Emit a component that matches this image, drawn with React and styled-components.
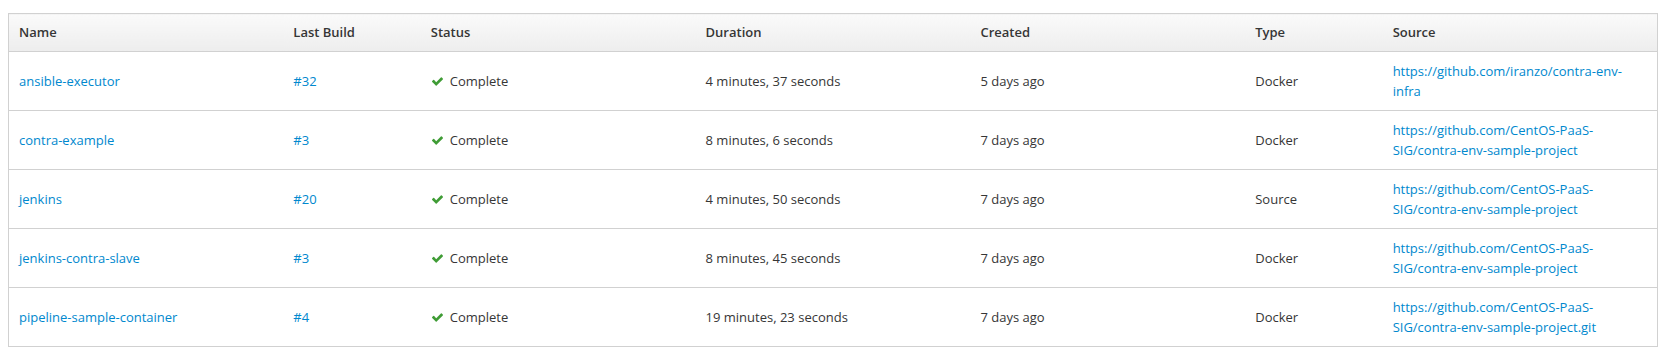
import React from "react";
import styled, { createGlobalStyle } from "styled-components";

const Global = createGlobalStyle`
  html, body { margin: 0; padding: 0; background: #fff; }
  body { font-family: "Open Sans", "Liberation Sans", sans-serif; font-size: 13px; color: #363636; }
`;

const Page = styled.div`
  padding: 13px 12px 13px 8px;
`;

const Table = styled.table`
  width: 100%;
  border-collapse: collapse;
  table-layout: fixed;
  border: 1px solid #d1d1d1;
  font-size: 13px;
  line-height: 20px;
`;

const Col = styled.col`
  width: ${(p) => (p.$span / 12) * 100}%;
`;

const HeadCell = styled.th`
  text-align: left;
  font-weight: 600;
  color: #363636;
  padding: 8px 10px 9px;
  background: linear-gradient(to bottom, #fafafa 0%, #ededed 100%);
  border-bottom: 1px solid #d1d1d1;
`;

const Row = styled.tr`
  border-bottom: 1px solid #d1d1d1;
`;

const Cell = styled.td`
  padding: 9px 10px;
  vertical-align: middle;
  color: #363636;
  word-wrap: break-word;
`;

const Link = styled.a`
  color: #0088ce;
  text-decoration: none;
`;

const Status = styled.span`
  display: inline-flex;
  align-items: center;
  gap: 7px;
`;

const CheckIcon = () => (
  <svg width="11" height="9" viewBox="0 0 1550 1188" style={{ marginLeft: 1 }}>
    <path
      fill="#3f9c35"
      d="M1550 232q0 40-28 68l-724 724-136 136q-28 28-68 28t-68-28l-136-136-362-362q-28-28-28-68t28-68l136-136q28-28 68-28t68 28l294 295 656-657q28-28 68-28t68 28l136 136q28 28 28 68z"
    />
  </svg>
);

const rows = [
  ["ansible-executor", "#32", "4 minutes, 37 seconds", "5 days ago", "Docker", "https://github.com/iranzo/contra-env-infra"],
  ["contra-example", "#3", "8 minutes, 6 seconds", "7 days ago", "Docker", "https://github.com/CentOS-PaaS-SIG/contra-env-sample-project"],
  ["jenkins", "#20", "4 minutes, 50 seconds", "7 days ago", "Source", "https://github.com/CentOS-PaaS-SIG/contra-env-sample-project"],
  ["jenkins-contra-slave", "#3", "8 minutes, 45 seconds", "7 days ago", "Docker", "https://github.com/CentOS-PaaS-SIG/contra-env-sample-project"],
  ["pipeline-sample-container", "#4", "19 minutes, 23 seconds", "7 days ago", "Docker", "https://github.com/CentOS-PaaS-SIG/contra-env-sample-project.git"],
];

const spans = [2, 1, 2, 2, 2, 1, 2];
const heads = ["Name", "Last Build", "Status", "Duration", "Created", "Type", "Source"];

export default function App() {
  return (
    <Page>
      <Global />
      <Table>
        <colgroup>
          {spans.map((s, i) => (
            <Col key={i} $span={s} />
          ))}
        </colgroup>
        <thead>
          <tr>
            {heads.map((h) => (
              <HeadCell key={h}>{h}</HeadCell>
            ))}
          </tr>
        </thead>
        <tbody>
          {rows.map(([name, build, dur, created, type, src]) => (
            <Row key={name}>
              <Cell><Link href="#">{name}</Link></Cell>
              <Cell><Link href="#">{build}</Link></Cell>
              <Cell>
                <Status>
                  <CheckIcon />
                  Complete
                </Status>
              </Cell>
              <Cell>{dur}</Cell>
              <Cell>{created}</Cell>
              <Cell>{type}</Cell>
              <Cell><Link href="#">{src}</Link></Cell>
            </Row>
          ))}
        </tbody>
      </Table>
    </Page>
  );
}
